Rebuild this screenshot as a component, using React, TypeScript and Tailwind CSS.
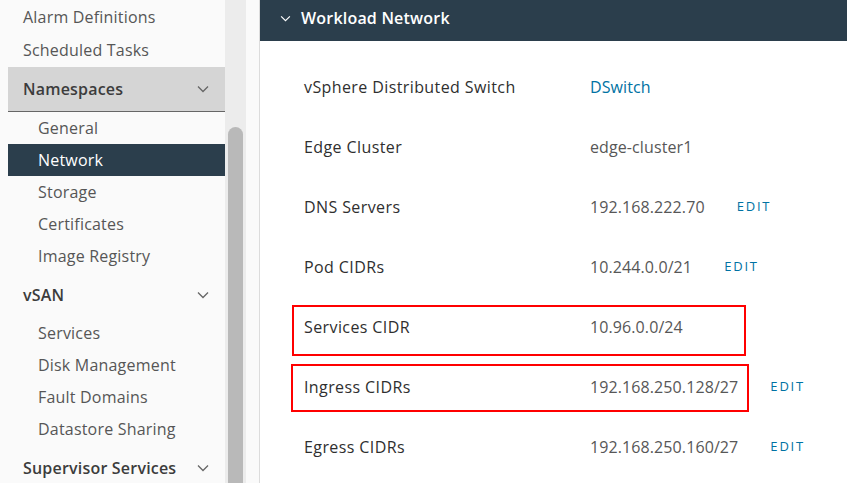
import React from "react";

const Chevron = ({ className = "" }: { className?: string }) => (
  <svg viewBox="0 0 12 8" className={className} fill="none" stroke="currentColor" strokeWidth="1.3">
    <path d="M1 1.5 L6 6.5 L11 1.5" />
  </svg>
);

const SubItem = ({ label, active = false }: { label: string; active?: boolean }) => (
  <div
    className={`h-[32px] flex items-center pl-[30px] ${
      active ? "bg-[#2b3e4c] text-white" : "text-[#565656]"
    }`}
  >
    {label}
  </div>
);

const Group = ({ label }: { label: string }) => (
  <div className="h-[44px] flex items-center justify-between pl-[15px] pr-[16px] font-semibold text-[#3c3c3c]">
    <span>{label}</span>
    <Chevron className="w-[12px] h-[8px] text-[#666]" />
  </div>
);

const rows: { label: string; value: string; link?: boolean; edit?: boolean }[] = [
  { label: "vSphere Distributed Switch", value: "DSwitch", link: true },
  { label: "Edge Cluster", value: "edge-cluster1" },
  { label: "DNS Servers", value: "192.168.222.70", edit: true },
  { label: "Pod CIDRs", value: "10.244.0.0/21", edit: true },
  { label: "Services CIDR", value: "10.96.0.0/24" },
  { label: "Ingress CIDRs", value: "192.168.250.128/27", edit: true },
  { label: "Egress CIDRs", value: "192.168.250.160/27", edit: true },
];

export default function App() {
  return (
    <div
      className="relative flex w-[847px] h-[483px] overflow-hidden bg-white text-[16px]"
      style={{ fontFamily: '"Open Sans", "Liberation Sans", sans-serif' }}
    >
      {/* Sidebar */}
      <div className="w-[225px] shrink-0 bg-[#fafafa] pl-[8px] pt-[1px] tracking-[0.2px]">
        <div className="h-[32px] flex items-center pl-[15px] text-[#565656]">Alarm Definitions</div>
        <div className="h-[33px] flex items-center pl-[15px] text-[#565656]">Scheduled Tasks</div>
        <div className="mt-[1px] bg-[#d5d5d5] border-b border-[#666]">
          <Group label="Namespaces" />
        </div>
        <SubItem label="General" />
        <SubItem label="Network" active />
        <SubItem label="Storage" />
        <SubItem label="Certificates" />
        <SubItem label="Image Registry" />
        <div className="mt-[1px]">
          <Group label="vSAN" />
        </div>
        <SubItem label="Services" />
        <SubItem label="Disk Management" />
        <SubItem label="Fault Domains" />
        <SubItem label="Datastore Sharing" />
        <div className="mt-[1px]">
          <Group label="Supervisor Services" />
        </div>
      </div>

      {/* Scrollbar */}
      <div className="w-[21px] shrink-0 bg-[#ececec] flex flex-col pt-[127px] px-[3px]">
        <div className="flex-1 bg-[#b9b9b9] rounded-t-full" />
      </div>
      <div className="w-[14px] shrink-0 bg-[#fafafa] border-r border-[#dcdcdc]" />

      {/* Main */}
      <div className="flex-1 flex flex-col bg-white">
        <div className="h-[41px] shrink-0 bg-[#2b3e4c] flex items-start pt-[6px] pl-[20px] text-white font-semibold tracking-[0.2px]">
          <Chevron className="w-[11px] h-[7px] mr-[10px] mt-[9px] text-white" />
          <span>Workload Network</span>
        </div>
        <div className="pt-[16px] pl-[44px]">
          {rows.map((r) => (
            <div key={r.label} className="h-[60px] flex items-center">
              <div className="w-[286px] shrink-0 text-[#2f2f2f] tracking-[0.4px]">{r.label}</div>
              <div className={`tracking-[0.1px] ${r.link ? "text-[#0072a3]" : "text-[#575757]"}`}>{r.value}</div>
              {r.edit && (
                <div className="ml-[32px] text-[13px] tracking-[1.8px] text-[#0072a3] font-medium">EDIT</div>
              )}
            </div>
          ))}
        </div>
      </div>

      {/* Annotation boxes */}
      <div className="absolute left-[292px] top-[305px] w-[454px] h-[51px] border-2 border-[#ff0000] pointer-events-none" />
      <div className="absolute left-[291px] top-[364px] w-[458px] h-[48px] border-2 border-[#ff0000] pointer-events-none" />
    </div>
  );
}
